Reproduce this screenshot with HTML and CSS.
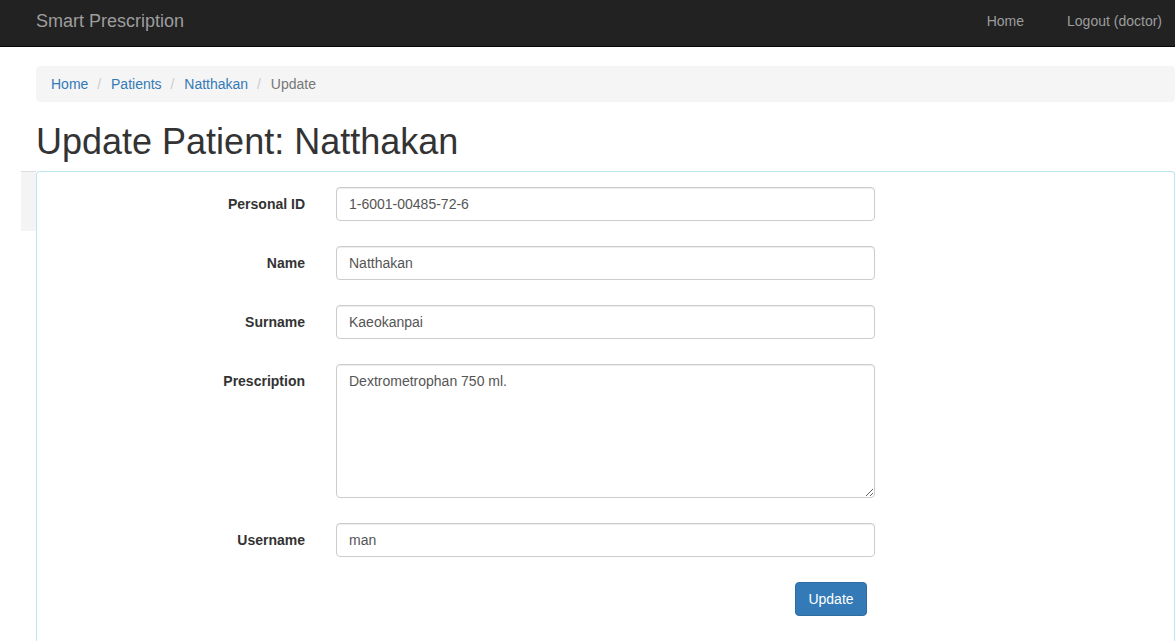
FILE: index.html
```html
<!DOCTYPE html>
<html>
<head>
<meta charset="utf-8">
<title>Update Patient</title>
<link rel="stylesheet" href="styles.css">
</head>
<body>
<nav class="navbar">
  <a class="brand" href="#">Smart Prescription</a>
  <div class="nav-links">
    <a href="#">Home</a>
    <a href="#">Logout (doctor)</a>
  </div>
</nav>
<div class="container">
  <ol class="breadcrumb">
    <li><a href="#">Home</a></li>
    <li><a href="#">Patients</a></li>
    <li><a href="#">Natthakan</a></li>
    <li class="active">Update</li>
  </ol>
  <h1 class="title">Update Patient: Natthakan</h1>
</div>
<div class="main">
  <div class="side"></div>
  <div class="panel">
    <form class="form">
      <label class="label">Personal ID</label>
      <input class="control" type="text" value="1-6001-00485-72-6">
      <label class="label">Name</label>
      <input class="control" type="text" value="Natthakan">
      <label class="label">Surname</label>
      <input class="control" type="text" value="Kaeokanpai">
      <label class="label">Prescription</label>
      <textarea class="control area">Dextrometrophan 750 ml.</textarea>
      <label class="label">Username</label>
      <input class="control" type="text" value="man">
      <span></span>
      <div class="actions"><button class="btn" type="button">Update</button></div>
    </form>
  </div>
</div>
</body>
</html>
```
FILE: styles.css
```css
* { box-sizing: border-box; }
html, body { margin: 0; padding: 0; }
body {
  font-family: "Liberation Sans", Arial, sans-serif;
  font-size: 14px;
  line-height: 20px;
  color: #333;
  background: #fff;
  width: 1175px;
  overflow: hidden;
}
a { text-decoration: none; }

.navbar {
  display: flex;
  align-items: flex-start;
  height: 47px;
  background: #222;
  border-bottom: 1px solid #080808;
  padding: 0 13px 0 36px;
}
.brand {
  color: #9d9d9d;
  font-size: 18px;
  line-height: 20px;
  padding-top: 11px;
}
.nav-links {
  margin-left: auto;
  display: flex;
  gap: 43px;
  padding-top: 11px;
}
.nav-links a { color: #9d9d9d; font-size: 14px; line-height: 20px; }

.container { padding-left: 36px; }

.breadcrumb {
  list-style: none;
  margin: 19px 0 20px;
  padding: 8px 15px;
  background: #f5f5f5;
  border-radius: 4px;
}
.breadcrumb li { display: inline-block; }
.breadcrumb li + li::before {
  content: "/\00a0";
  padding: 0 6px 0 5px;
  color: #ccc;
}
.breadcrumb a { color: #337ab7; }
.breadcrumb .active { color: #777; }

.title {
  margin: 0 0 9px;
  font-size: 36px;
  font-weight: 500;
  line-height: 1.1;
  color: #333;
}

.main {
  display: flex;
  align-items: flex-start;
  padding-left: 21px;
}
.side {
  width: 15px;
  height: 60px;
  background: #f4f4f4;
  border-top: 1px solid #ddd;
  flex: none;
}
.panel {
  flex: 1;
  height: 470px;
  border: 1px solid #bce8f1;
  border-bottom: none;
  border-radius: 4px 4px 0 0;
  padding-top: 15px;
}

.form {
  display: grid;
  grid-template-columns: 268px 539px;
  column-gap: 31px;
  row-gap: 25px;
  align-items: start;
}
.label {
  text-align: right;
  font-weight: bold;
  padding-top: 7px;
  line-height: 20px;
  color: #333;
}
.control {
  display: block;
  width: 539px;
  height: 34px;
  padding: 6px 12px;
  font-family: "Liberation Sans", Arial, sans-serif;
  font-size: 14px;
  line-height: 20px;
  color: #555;
  background: #fff;
  border: 1px solid #ccc;
  border-radius: 4px;
  box-shadow: inset 0 1px 1px rgba(0,0,0,.075);
  margin: 0;
}
.area { height: 134px; resize: vertical; }

.actions { display: flex; }
.btn {
  margin-left: 459px;
  width: 72px;
  height: 34px;
  padding: 6px 12px;
  font-family: "Liberation Sans", Arial, sans-serif;
  font-size: 14px;
  line-height: 20px;
  color: #fff;
  background: #337ab7;
  border: 1px solid #2e6da4;
  border-radius: 4px;
}
```
